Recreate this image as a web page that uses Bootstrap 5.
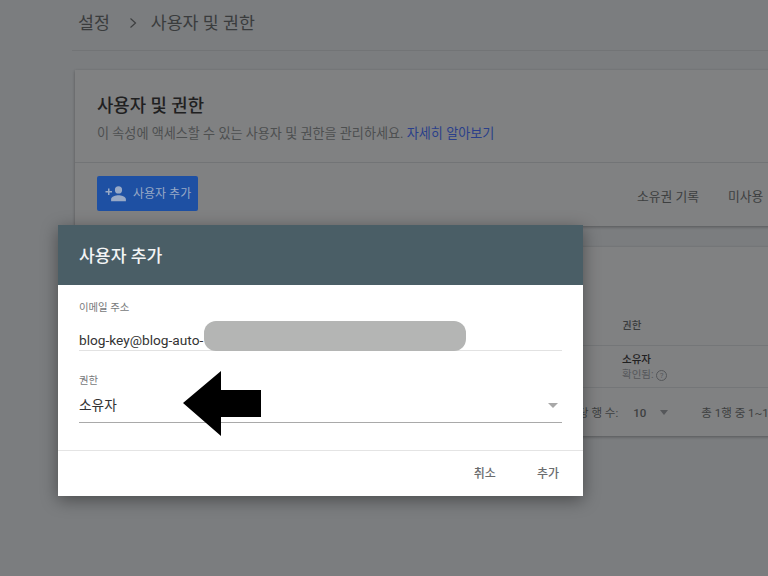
<!DOCTYPE html>
<html lang="ko">
<head>
  <meta charset="UTF-8">
  <title>사용자 및 권한</title>
  <link href="https://cdn.jsdelivr.net/npm/bootstrap@5.3.0/dist/css/bootstrap.min.css" rel="stylesheet">
  <style>
    html, body { height: 100%; }
    body { background: #7b7d7f; overflow: hidden; font-family: Roboto, "Noto Sans CJK KR", sans-serif; color: #2b2c2d; }
    .page-wrap { width: 768px; height: 576px; overflow: hidden; position: relative; padding-left: 72px; }
    .crumbs { height: 51px; border-bottom: 1px solid #727476; padding: 11px 0 0 6px; font-size: 17.300px; line-height: 24px; color: #3a3c3d; gap: 13px; }
    .crumbs svg { width: 10px; height: 12px; margin: 6px 0 0 5px; }
    .sheet { width: 760px; margin-left: 3px; background: #808182; box-shadow: 0 1px 3px rgba(0,0,0,.3); }
    .sheet-top { margin-top: 19px; height: 156px; }
    .sheet-intro { height: 93px; padding: 24px 22px 0; border-bottom: 1px solid #727476; }
    .sheet-title { font-size: 17.800px; line-height: 24px; font-weight: 500; color: #1f2021; }
    .sheet-sub { font-size: 13.100px; line-height: 18px; margin-top: 7px; color: #4d4f50; white-space: nowrap; }
    .sheet-sub a { color: #2a3f8a; text-decoration: none; }
    .sheet-actions { padding: 13px 0 0 22px; }
    .add-btn { width: 102px; height: 35px; background: #1e50a3; color: #98a9c6; border-radius: 2px; font-size: 12px; gap: 5px; padding-left: 7px; }
    .add-btn svg { width: 24px; height: 20px; }
    .side-links { width: 200px; margin-left: 439px; margin-top: 11px; gap: 29px; font-size: 12.800px; color: #3d3f40; white-space: nowrap; }
    .sheet-table { margin-top: 21px; height: 189px; padding-left: 0; }
    .tbl-head { height: 99px; border-bottom: 1px solid #747678; padding: 70px 0 0 547px; font-size: 10.500px; line-height: 18px; color: #3a3c3d; font-weight: 500; }
    .tbl-row { height: 42px; border-bottom: 1px solid #747678; padding: 6px 0 0 547px; font-size: 10.500px; line-height: 15px; }
    .tbl-row strong { color: #1f2021; font-weight: 500; display: block; }
    .tbl-row span { color: #55575a; }
    .qmark { display: inline-block; width: 11px; height: 11px; border: 1px solid #55575a; border-radius: 50%; font-size: 8px; line-height: 9px; text-align: center; vertical-align: 0; }
    .tbl-foot { padding: 16px 0 0 503px; font-size: 11.500px; line-height: 18px; color: #3d3f40; white-space: nowrap; }
    .tbl-foot b { font-weight: 500; margin: 0 14px 0 15px; }
    .tbl-foot i { display: inline-block; border: 4px solid transparent; border-top: 5px solid #55575a; border-bottom: 0; margin: 0 33px 2px 0; }
    .dialog-box { position: absolute; left: 58px; top: 225px; width: 525px; height: 271px; background: #fff; box-shadow: 0 4px 16px rgba(0,0,0,.4); }
    .dialog-head { height: 60px; background: #4a5e66; color: #f2f4f5; font-size: 17.200px; font-weight: 500; line-height: 24px; padding: 19px 21px 0; }
    .dialog-body { height: 166px; padding: 15px 21px 0; border-bottom: 1px solid #e4e4e4; position: relative; }
    .f-label { font-size: 10.400px; line-height: 15px; color: #77797b; }
    .f-value { font-size: 13.700px; line-height: 20px; color: #333; }
    .f-email { height: 36px; padding-top: 15px; border-bottom: 1px solid #e2e2e2; white-space: nowrap; }
    .f-perm { height: 35px; padding-top: 7px; border-bottom: 1px solid #a9a9a9; position: relative; }
    .perm-label { margin-top: 22px; }
    .perm-caret { position: absolute; right: 4px; top: 15px; border: 5px solid transparent; border-top: 5px solid #a8a8a8; border-bottom: 0; }
    .blur-out { position: absolute; left: 146px; top: 36px; width: 262px; height: 30px; border-radius: 12px; background: #b4b5b4; }
    .big-arrow { position: absolute; left: 125px; top: 86px; width: 78px; height: 65px; }
    .dialog-foot { padding: 14px 24px 0 0; gap: 41px; font-size: 12px; line-height: 18px; color: #6a6c6e; font-weight: 500; }
  </style>
</head>
<body>

<div class="page-wrap">
  <div class="crumbs d-flex">
    <span>설정</span>
    <svg viewBox="0 0 10 12"><path d="M2.500 1.500 7.500 6 2.500 10.500" fill="none" stroke="#3d3f40" stroke-width="1.200"/></svg>
    <span>사용자 및 권한</span>
  </div>

  <div class="sheet sheet-top">
    <div class="sheet-intro">
      <div class="sheet-title">사용자 및 권한</div>
      <div class="sheet-sub">이 속성에 액세스할 수 있는 사용자 및 권한을 관리하세요. <a href="#">자세히 알아보기</a></div>
    </div>
    <div class="sheet-actions d-flex">
      <div class="add-btn d-flex align-items-center">
        <svg viewBox="0 0 24 20"><path d="M14.500 9.500a3.600 3.600 0 1 0 0-7.200 3.600 3.600 0 0 0 0 7.200ZM14.500 11.300c-2.600 0-7.400 1.300-7.400 3.900v2h14.800v-2c0-2.600-4.800-3.900-7.400-3.900ZM5.500 7V4.500H4V7H1.500v1.500H4V11h1.500V8.500H8V7Z" fill="#98a9c6"/></svg>
        <span>사용자 추가</span>
      </div>
      <div class="side-links d-flex"><span>소유권 기록</span><span>미사용</span></div>
    </div>
  </div>

  <div class="sheet sheet-table">
    <div class="tbl-head">권한</div>
    <div class="tbl-row"><strong>소유자</strong><span>확인됨: <span class="qmark">?</span></span></div>
    <div class="tbl-foot">당 행 수:<b>10</b><i></i>총 1행 중 1~1</div>
  </div>

  <div class="dialog-box">
    <div class="dialog-head">사용자 추가</div>
    <div class="dialog-body">
      <div class="f-label">이메일 주소</div>
      <div class="f-value f-email">blog-key@blog-auto-</div>
      <div class="f-label perm-label">권한</div>
      <div class="f-value f-perm">소유자<span class="perm-caret"></span></div>
      <div class="blur-out"></div>
      <svg class="big-arrow" viewBox="0 0 78 65"><path d="M0 32 38 0V19H78V46H38V65Z" fill="#000"/></svg>
    </div>
    <div class="dialog-foot d-flex justify-content-end"><span>취소</span><span>추가</span></div>
  </div>
</div>

<script src="https://cdn.jsdelivr.net/npm/bootstrap@5.3.0/dist/js/bootstrap.bundle.min.js"></script>
</body>
</html>
